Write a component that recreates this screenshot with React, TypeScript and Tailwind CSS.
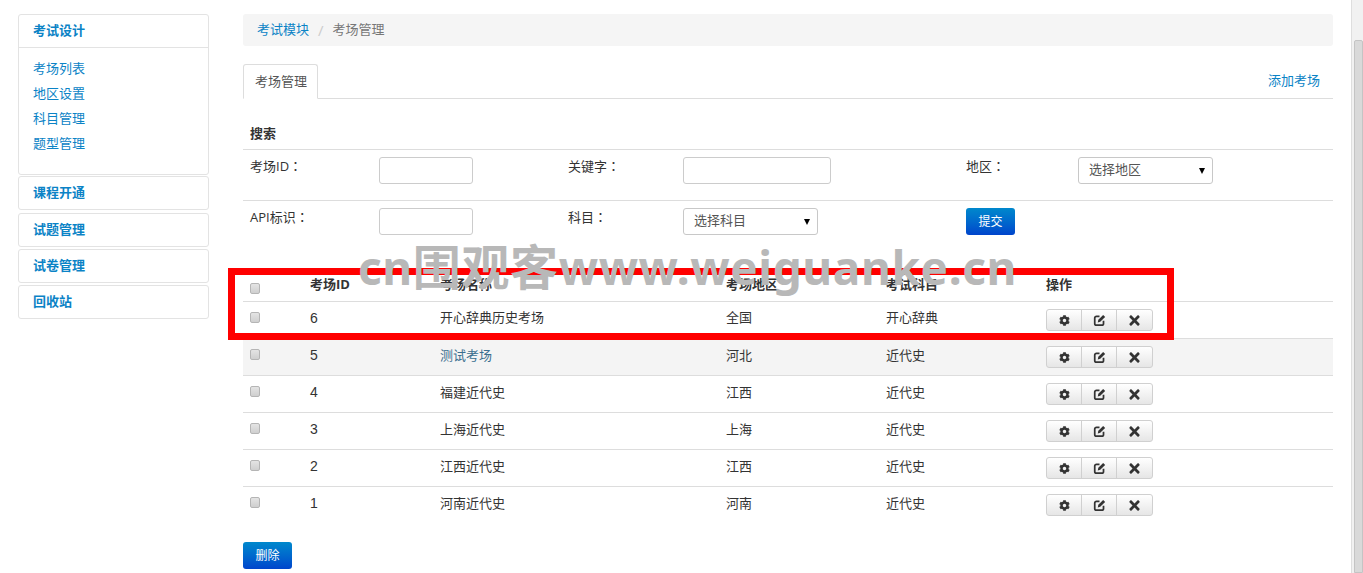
import { FaCog, FaTimes } from 'react-icons/fa';

const rows = [
  { id: 6, name: '开心辞典历史考场', area: '全国', subject: '开心辞典' },
  { id: 5, name: '测试考场', area: '河北', subject: '近代史', link: true },
  { id: 4, name: '福建近代史', area: '江西', subject: '近代史' },
  { id: 3, name: '上海近代史', area: '上海', subject: '近代史' },
  { id: 2, name: '江西近代史', area: '江西', subject: '近代史' },
  { id: 1, name: '河南近代史', area: '河南', subject: '近代史' },
];

const font = 'font-["Open_Sans","Noto_Sans_CJK_SC",sans-serif]';

function Check() {
  return (
    <input
      type="checkbox"
      className="appearance-none block w-[10px] h-[11px] rounded-[2px] border border-[#b5b5b5] bg-gradient-to-b from-[#e4e4e4] to-[#cfcfcf]"
    />
  );
}

function Select({ label }: { label: string }) {
  return (
    <div className="relative w-[135px] h-[27px] rounded-[3px] border border-[#c8c8c8] bg-white flex items-center pl-[10px] pb-px text-[#555]">
      {label}
      <span className="absolute right-[7px] top-[10px] w-0 h-0 border-x-[3px] border-t-[6px] border-x-transparent border-t-black" />
    </div>
  );
}

function Field({ w }: { w: string }) {
  return <input className={`${w} block h-[27px] rounded-[3px] border border-[#ccc] bg-white`} />;
}

function Label({ text }: { text: string }) {
  return <div className='font-["Open_Sans","Noto_Sans_CJK_TC",sans-serif]'>{text}</div>;
}

function BlueButton({ label }: { label: string }) {
  return (
    <button className="block w-[49px] h-[27px] rounded-[3px] bg-gradient-to-b from-[#0088cc] to-[#0044cc] text-white text-[12px]">
      {label}
    </button>
  );
}

function SideHead({ label }: { label: string }) {
  return (
    <div className="h-[34px] rounded-[3px] border border-[#e3e3e3] pl-[14px] flex items-center font-bold text-[#0b83c6]">
      {label}
    </div>
  );
}

function EditIcon() {
  return (
    <svg width="13" height="13" viewBox="0 0 12 12" fill="none">
      <path
        d="M6 2.2H3.2A1.6 1.6 0 0 0 1.6 3.8v4.9a1.6 1.6 0 0 0 1.6 1.6h4.9a1.6 1.6 0 0 0 1.6-1.6V6.2"
        stroke="currentColor"
        strokeWidth="1.6"
      />
      <path d="M4.4 7.8 4.9 5.4 9.4.9 11.2 2.7 6.7 7.2Z" fill="currentColor" />
    </svg>
  );
}

function Actions() {
  return (
    <div className="flex w-[107px] h-[22px] rounded-[3px] border border-[#d0d0d0] bg-gradient-to-b from-white to-[#e6e6e6] text-[#333]">
      <span className="w-[35px] flex items-center justify-center border-r border-[#d0d0d0]">
        <FaCog size={11} />
      </span>
      <span className="w-[35px] flex items-center justify-center border-r border-[#d0d0d0]">
        <EditIcon />
      </span>
      <span className="flex-1 flex items-center justify-center">
        <FaTimes size={15} />
      </span>
    </div>
  );
}

export default function App() {
  return (
    <div className={`relative h-[573px] w-[1363px] overflow-hidden bg-white text-[13px] text-[#333] ${font}`}>
      <div className="flex pt-[14px] pl-[18px]">
        {/* Sidebar */}
        <div className="w-[191px] shrink-0 flex flex-col gap-[2px]">
          <div className="h-[161px] -mb-px rounded-[3px] border border-[#e3e3e3]">
            <div className="h-[33px] border-b border-[#e3e3e3] pl-[14px] flex items-center font-bold text-[#0b83c6]">
              考试设计
            </div>
            <div className="pl-[14px] pt-[8px] flex flex-col text-[#0b83c6] leading-[25px]">
              <a>考场列表</a>
              <a>地区设置</a>
              <a>科目管理</a>
              <a>题型管理</a>
            </div>
          </div>
          <SideHead label="课程开通" />
          <div className="mt-px flex flex-col gap-[2px]">
            <SideHead label="试题管理" />
            <SideHead label="试卷管理" />
            <SideHead label="回收站" />
          </div>
        </div>

        {/* Main */}
        <div className="ml-[34px] w-[1090px] shrink-0">
          <div className="h-[32px] rounded-[3px] bg-[#f5f5f5] pl-[14px] flex items-center">
            <a className="text-[#0b83c6]">考试模块</a>
            <span className="mx-[9px] text-[15px] text-[#ccc]">/</span>
            <span className="text-[#777]">考场管理</span>
          </div>

          <div className="mt-[18px] h-[35px] flex items-end justify-between border-b border-[#ddd]">
            <div className="h-[35px] w-[75px] -mb-px rounded-t-[3px] border border-[#ddd] border-b-white bg-white flex items-center pl-[11px] text-[#555]">
              考场管理
            </div>
            <a className="h-[34px] pr-[13px] flex items-center text-[#0b83c6]">添加考场</a>
          </div>

          {/* Search */}
          <div className="h-[51px] border-b border-[#ddd] pl-[7px] flex items-end pb-[6px] font-bold">搜索</div>
          <div className="h-[51px] border-b border-[#ddd] pl-[7px] pt-[7px] grid grid-cols-[129px_189px_115px_283px_112px_1fr]">
            <Label text="考场ID：" />
            <Field w="w-[94px]" />
            <Label text="关键字：" />
            <Field w="w-[148px]" />
            <Label text="地区：" />
            <Select label="选择地区" />
          </div>
          <div className="h-[52px] pl-[7px] pt-[7px] grid grid-cols-[129px_189px_115px_283px_1fr]">
            <Label text="API标识：" />
            <Field w="w-[94px]" />
            <Label text="科目：" />
            <Select label="选择科目" />
            <BlueButton label="提交" />
          </div>

          {/* Table */}
          <div className="mt-[13px] h-[36px] border-b border-[#ddd] pl-[7px] pb-[7px] grid grid-cols-[60px_130px_286px_160px_160px_1fr] items-end font-bold">
            <div>
              <Check />
            </div>
            <div>考场ID</div>
            <div>考场名称</div>
            <div>考场地区</div>
            <div>考试科目</div>
            <div>操作</div>
          </div>
          {rows.map((row) => {
            const shift = row.id === 6 ? '-mt-px' : '';
            return (
              <div
                key={row.id}
                className={`h-[37px] border-b border-[#ddd] pl-[7px] pt-[7px] grid grid-cols-[60px_130px_286px_160px_160px_1fr] ${
                  row.id === 5 ? 'bg-[#f4f4f4]' : ''
                } ${row.id === 1 ? 'border-b-0' : ''}`}
              >
                <div className="pt-[3px]">
                  <Check />
                </div>
                <div className='-mt-px text-[14px] font-["Liberation_Sans",sans-serif]'>{row.id}</div>
                <div className={`${shift} ${row.link ? 'text-[#3a6f8f]' : ''}`}>{row.name}</div>
                <div className={shift}>{row.area}</div>
                <div className={shift}>{row.subject}</div>
                <Actions />
              </div>
            );
          })}

          <div className="mt-[18px]">
            <BlueButton label="删除" />
          </div>
        </div>
      </div>

      {/* Scrollbar */}
      <div className="absolute right-0 top-0 bottom-0 w-[12px] border-l border-[#dedede] bg-[#f1f1f1]">
        <div className="absolute left-[2px] right-0 top-[40px] bottom-0 rounded-t-[2px] border border-[#c4c4c4] bg-[#d9d9d9]" />
      </div>

      {/* Red highlight box drawn over the screenshot */}
      <div className="absolute left-[228px] top-[268px] w-[946px] h-[72px] border-[7px] border-[#ff0000]" />

      {/* Watermark */}
      <div className='absolute left-[358px] top-[237px] whitespace-nowrap text-[46px] leading-[60px] tracking-[0.6px] font-bold text-[#b8b8b8] font-["Noto_Sans","Noto_Sans_CJK_SC",sans-serif]'>
        cn<span className="text-[48px]">围观客</span>www.weiguanke.cn
      </div>
    </div>
  );
}
